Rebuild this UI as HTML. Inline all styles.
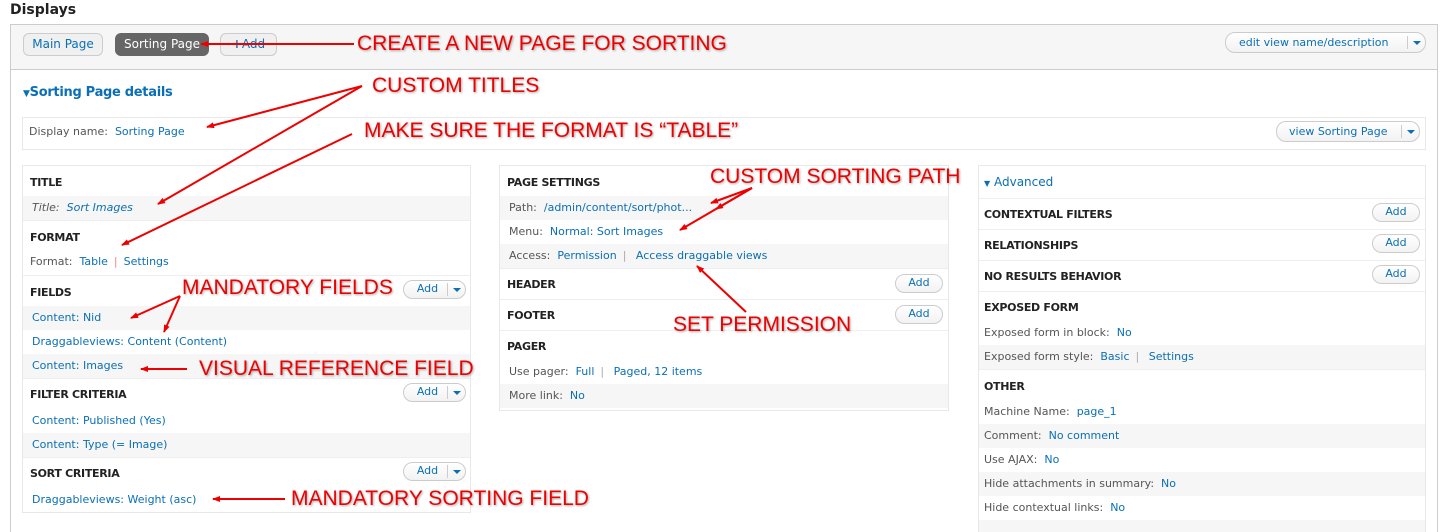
<!DOCTYPE html>
<html><head><meta charset="utf-8"><style>
*{margin:0;padding:0;box-sizing:border-box}
html,body{width:1444px;height:532px;overflow:hidden}
body{background:#fff;position:relative;font-family:"DejaVu Sans","Liberation Sans",sans-serif;font-size:11px;color:#555}
.a{position:absolute}
a,.l{color:#0a6fb5;text-decoration:none}
.h{position:absolute;font-weight:bold;color:#222;font-size:11px;letter-spacing:-0.3px}
.row{position:absolute;height:24px;line-height:24px;padding-left:9px;white-space:nowrap}
.g{background:#f6f6f6}
.col{position:absolute;border:1px solid #e8e8e8;background:#fff}
.sep{color:#aaa;margin:0 6px}
.btn{position:absolute;border:1px solid #ccc;border-radius:10px;background:linear-gradient(#fff,#f2f2f2);color:#0a6fb5;font-size:11px;text-align:center;line-height:16px;height:19px}
.dd{position:absolute;right:0;top:2px;width:18px;height:13px;border-left:1px solid #ccc}
.dd:after{content:"";position:absolute;left:5px;top:5px;border:4px solid transparent;border-top:4px solid #0a6fb5;border-bottom:0}
.ann{position:absolute;color:#e00;font-family:"Liberation Sans",sans-serif;font-size:21px;white-space:nowrap;text-shadow:1px 1px 2px rgba(0,0,0,.35)}
.hl{position:absolute;left:0;right:0;border-top:1px solid #eee}
</style></head><body>
<div class="a" style="left:10px;top:2px;font-weight:bold;font-size:14px;color:#222">Displays</div>
<div class="a" style="left:10px;top:24px;width:1428px;height:508px;border:1px solid #ccc;border-bottom:none"></div>
<div class="a" style="left:11px;top:25px;width:1426px;height:45px;background:#f6f6f6;border-bottom:1px solid #ccc"></div>
<div class="a" style="left:23px;top:33px;width:80px;height:23px;border:1px solid #ccc;border-radius:6px;background:#f0f0f0;color:#0a6fb5;font-size:12px;line-height:21px;text-align:center">Main Page</div>
<div class="a" style="left:115px;top:33px;width:94px;height:23px;border-radius:6px;background:#666;color:#fff;font-size:12px;line-height:22px;text-align:center">Sorting Page</div>
<div class="a" style="left:220px;top:33px;width:57px;height:23px;border:1px solid #ccc;border-radius:6px;background:#f0f0f0;color:#0a6fb5;font-size:12px;line-height:21px;text-align:center"><b>+</b>Add</div>
<div class="btn" style="left:1225px;top:32px;width:201px;height:21px;line-height:19px;text-align:left;padding-left:13px">edit view name/description<span class="dd" style="top:3px"></span></div>

<div class="a" style="left:23px;top:85px;font-weight:bold;font-size:13px;color:#0a6fb5;letter-spacing:-0.3px"><span style="font-size:9px">▼</span>Sorting Page details</div>
<div class="col" style="left:22px;top:117px;width:1404px;height:33px"></div>
<div class="row" style="left:20px;top:120px">Display name:&nbsp; <a>Sorting Page</a></div>
<div class="btn" style="left:1276px;top:121px;width:144px;height:21px;line-height:19px;text-align:left;padding-left:12px">view Sorting Page<span class="dd" style="top:3px"></span></div>

<div class="col" style="left:22px;top:165px;width:449px;height:348px">
<div class="h" style="left:7px;top:10px">TITLE</div>
<div class="row g" style="left:0;top:30px;width:447px"><i><span>Title:</span>&nbsp; <a>Sort Images</a></i></div>
<div class="hl" style="top:54px"></div>
<div class="h" style="left:7px;top:65px">FORMAT</div>
<div class="row" style="left:-2px;top:84px;width:447px">Format:&nbsp; <a>Table</a><span class="sep" style="color:#e88">|</span><a>Settings</a></div>
<div class="hl" style="top:109px"></div>
<div class="h" style="left:7px;top:120px">FIELDS</div>
<div class="btn" style="left:380px;top:114px;width:63px">Add&nbsp;&nbsp;&nbsp;&nbsp;<span class="dd"></span></div>
<div class="row g" style="left:0;top:140px;width:447px"><a>Content: Nid</a></div>
<div class="row" style="left:0;top:164px;width:447px"><a>Draggableviews: Content (Content)</a></div>
<div class="row g" style="left:0;top:188px;width:447px"><a>Content: Images</a></div>
<div class="hl" style="top:212px"></div>
<div class="h" style="left:7px;top:222px">FILTER CRITERIA</div>
<div class="btn" style="left:380px;top:217px;width:63px">Add&nbsp;&nbsp;&nbsp;&nbsp;<span class="dd"></span></div>
<div class="row" style="left:0;top:243px;width:447px"><a>Content: Published (Yes)</a></div>
<div class="row g" style="left:0;top:267px;width:447px"><a>Content: Type (= Image)</a></div>
<div class="hl" style="top:291px"></div>
<div class="h" style="left:7px;top:301px">SORT CRITERIA</div>
<div class="btn" style="left:380px;top:296px;width:63px">Add&nbsp;&nbsp;&nbsp;&nbsp;<span class="dd"></span></div>
<div class="row" style="left:0;top:322px;width:447px"><a>Draggableviews: Weight (asc)</a></div>
</div>

<div class="col" style="left:499px;top:165px;width:450px;height:246px">
<div class="h" style="left:7px;top:10px">PAGE SETTINGS</div>
<div class="row g" style="left:0;top:30px;width:448px">Path:&nbsp; <a>/admin/content/sort/phot...</a></div>
<div class="row" style="left:0;top:54px;width:448px">Menu:&nbsp; <a>Normal: Sort Images</a></div>
<div class="row g" style="left:0;top:78px;width:448px">Access:&nbsp; <a>Permission</a><span class="sep">|</span>&nbsp;<a>Access draggable views</a></div>
<div class="hl" style="top:102px"></div>
<div class="h" style="left:7px;top:112px">HEADER</div>
<div class="btn" style="left:395px;top:108px;width:48px">Add</div>
<div class="hl" style="top:133px"></div>
<div class="h" style="left:7px;top:143px">FOOTER</div>
<div class="btn" style="left:395px;top:139px;width:48px">Add</div>
<div class="hl" style="top:164px"></div>
<div class="h" style="left:7px;top:174px">PAGER</div>
<div class="row" style="left:0;top:194px;width:448px">Use pager:&nbsp; <a>Full</a><span class="sep">|</span>&nbsp;<a>Paged, 12 items</a></div>
<div class="row g" style="left:0;top:218px;width:448px">More link:&nbsp; <a>No</a></div>
</div>

<div class="col" style="left:978px;top:165px;width:448px;height:367px;border-bottom:none;overflow:hidden">
<div class="a" style="left:5px;top:9px;font-size:12px;color:#0a6fb5"><span style="font-size:8px">▼</span> Advanced</div>
<div class="hl" style="top:32px"></div>
<div class="h" style="left:5px;top:42px">CONTEXTUAL FILTERS</div>
<div class="btn" style="left:393px;top:37px;width:48px">Add</div>
<div class="hl" style="top:63px"></div>
<div class="h" style="left:5px;top:73px">RELATIONSHIPS</div>
<div class="btn" style="left:393px;top:68px;width:48px">Add</div>
<div class="hl" style="top:94px"></div>
<div class="h" style="left:5px;top:104px">NO RESULTS BEHAVIOR</div>
<div class="btn" style="left:393px;top:99px;width:48px">Add</div>
<div class="hl" style="top:125px"></div>
<div class="h" style="left:5px;top:135px">EXPOSED FORM</div>
<div class="row" style="left:-4px;top:155px;width:446px">Exposed form in block:&nbsp; <a>No</a></div>
<div class="row g" style="left:0;top:179px;width:446px;padding-left:5px">Exposed form style:&nbsp; <a>Basic</a><span class="sep">|</span>&nbsp;<a>Settings</a></div>
<div class="hl" style="top:203px"></div>
<div class="h" style="left:5px;top:214px">OTHER</div>
<div class="row" style="left:-4px;top:234px;width:446px">Machine Name:&nbsp; <a>page_1</a></div>
<div class="row g" style="left:0;top:258px;width:446px;padding-left:5px">Comment:&nbsp; <a>No comment</a></div>
<div class="row" style="left:-4px;top:282px;width:446px">Use AJAX:&nbsp; <a>No</a></div>
<div class="row g" style="left:0;top:306px;width:446px;padding-left:5px">Hide attachments in summary:&nbsp; <a>No</a></div>
<div class="row" style="left:-4px;top:330px;width:446px">Hide contextual links:&nbsp; <a>No</a></div>
<div class="row g" style="left:0;top:354px;width:446px"></div>
</div>

<svg class="a" style="left:0;top:0" width="1444" height="532">
<defs><marker id="m" markerWidth="8" markerHeight="6" refX="7" refY="3" orient="auto" markerUnits="userSpaceOnUse"><path d="M0,0 L8,3 L0,6 Z" fill="#e00"/></marker></defs>
<g stroke="#e00" stroke-width="2" fill="none" marker-end="url(#m)">
<line x1="354" y1="44" x2="201" y2="44"/>
<line x1="362" y1="86" x2="207" y2="127"/>
<line x1="362" y1="86" x2="158" y2="204"/>
<line x1="352" y1="134" x2="122" y2="245"/>
<line x1="752" y1="188" x2="711" y2="203"/>
<line x1="752" y1="188" x2="716" y2="209"/>
<line x1="752" y1="188" x2="680" y2="230"/>
<line x1="180" y1="296" x2="131" y2="318"/>
<line x1="180" y1="296" x2="164" y2="332"/>
<line x1="746" y1="312" x2="697" y2="266"/>
<line x1="187" y1="369" x2="141" y2="369"/>
<line x1="285" y1="499" x2="213" y2="499"/>
</g></svg>

<div class="ann" style="left:357px;top:32px">CREATE A NEW PAGE FOR SORTING</div>
<div class="ann" style="left:372px;top:74px">CUSTOM TITLES</div>
<div class="ann" style="left:364px;top:119px">MAKE SURE THE FORMAT IS “TABLE”</div>
<div class="ann" style="left:710px;top:165px">CUSTOM SORTING PATH</div>
<div class="ann" style="left:182px;top:276px">MANDATORY FIELDS</div>
<div class="ann" style="left:673px;top:313px">SET PERMISSION</div>
<div class="ann" style="left:199px;top:357px">VISUAL REFERENCE FIELD</div>
<div class="ann" style="left:291px;top:487px">MANDATORY SORTING FIELD</div>
</body></html>
